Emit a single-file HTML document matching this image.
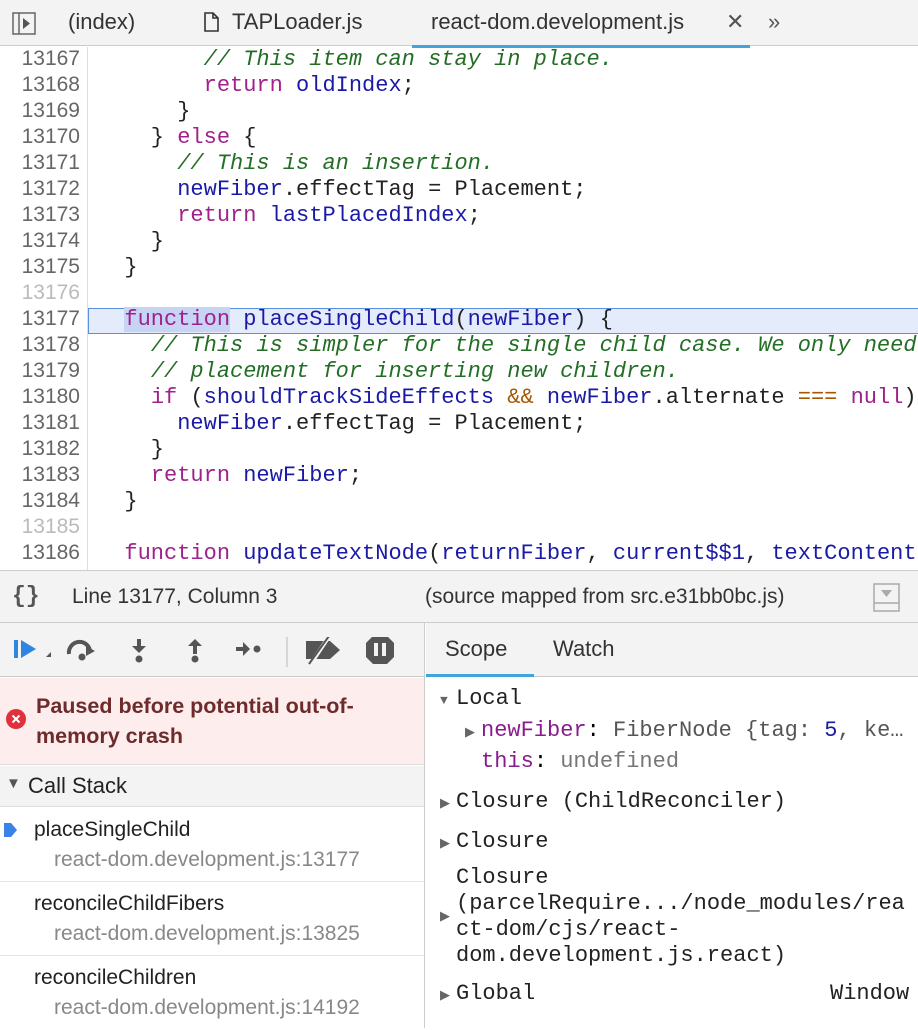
<!DOCTYPE html>
<html><head><meta charset="utf-8"><style>
*{margin:0;padding:0;box-sizing:border-box}
body{width:918px;height:1028px;overflow:hidden;background:#fff;font-family:"Liberation Sans",sans-serif;position:relative}
.abs{position:absolute}
.tabs{left:0;top:0;width:918px;height:46px;background:#f3f3f3;border-bottom:1px solid #ccc}
.tab{position:absolute;top:9px;font-size:22px;color:#333}
.code{left:0;top:47px;width:918px;height:523px;overflow:hidden}
.gut{position:absolute;left:0;top:0;width:88px;height:523px;border-right:1px solid #ddd}
.ln{position:absolute;left:0;width:80px;text-align:right;font-size:21px;color:#666;font-family:"Liberation Sans",sans-serif}
.cl{position:absolute;left:98px;font-family:"Liberation Mono",monospace;font-size:22px;white-space:pre;color:#222}
.c{color:#236e25;font-style:italic}.k{color:#a0218c}.v{color:#1a1aa6}.d{color:#222}.o{color:#a65700}
.mono{font-family:"Liberation Mono",monospace;font-size:22px;white-space:pre}
.tr{display:inline-block;width:16px;font-size:13px;color:#666}
</style></head><body>
<div class="abs tabs">
 <svg class="abs" style="left:12px;top:12px" width="26" height="24"><rect x="1" y="1" width="22" height="21" fill="none" stroke="#666" stroke-width="1.5"/><line x1="7" y1="1" x2="7" y2="22" stroke="#666" stroke-width="1.5"/><path d="M11 6 L18 11.5 L11 17Z" fill="#555"/></svg>
 <div class="tab" style="left:68px">(index)</div>
 <svg class="abs" style="left:203px;top:12px" width="16" height="20"><path d="M2 1H10L15 6V19H2Z M10 1V6H15" fill="none" stroke="#333" stroke-width="1.6"/></svg>
 <div class="tab" style="left:232px">TAPLoader.js</div>
 <div class="tab" style="left:431px">react-dom.development.js</div>
 <div class="tab" style="left:726px;color:#555">✕</div>
 <div class="tab" style="left:768px;color:#555">»</div>
</div>
<div class="abs" style="left:412px;top:45px;width:338px;height:3px;background:#40a5db"></div>
<div class="abs code">
 <div class="abs" style="left:88px;top:261px;width:830px;height:26px;background:#e4ecfc;border:1px solid #5b8fe0;border-right:none"></div>
 <div class="gut"></div>
 <div class="ln" style="top:0">13167</div><div class="cl" style="top:0">        <span class="c">// This item can stay in place.</span></div>
 <div class="ln" style="top:26px">13168</div><div class="cl" style="top:26px">        <span class="k">return</span> <span class="v">oldIndex</span>;</div>
 <div class="ln" style="top:52px">13169</div><div class="cl" style="top:52px">      }</div>
 <div class="ln" style="top:78px">13170</div><div class="cl" style="top:78px">    } <span class="k">else</span> {</div>
 <div class="ln" style="top:104px">13171</div><div class="cl" style="top:104px">      <span class="c">// This is an insertion.</span></div>
 <div class="ln" style="top:130px">13172</div><div class="cl" style="top:130px">      <span class="v">newFiber</span>.effectTag = Placement;</div>
 <div class="ln" style="top:156px">13173</div><div class="cl" style="top:156px">      <span class="k">return</span> <span class="v">lastPlacedIndex</span>;</div>
 <div class="ln" style="top:182px">13174</div><div class="cl" style="top:182px">    }</div>
 <div class="ln" style="top:208px">13175</div><div class="cl" style="top:208px">  }</div>
 <div class="ln" style="top:234px;color:#bbb">13176</div>
 <div class="ln" style="top:260px">13177</div><div class="cl" style="top:260px">  <span class="k" style="background:#c8d4f4">function</span> <span class="v">placeSingleChild</span>(<span class="v">newFiber</span>) {</div>
 <div class="ln" style="top:286px">13178</div><div class="cl" style="top:286px">    <span class="c">// This is simpler for the single child case. We only need</span></div>
 <div class="ln" style="top:312px">13179</div><div class="cl" style="top:312px">    <span class="c">// placement for inserting new children.</span></div>
 <div class="ln" style="top:338px">13180</div><div class="cl" style="top:338px">    <span class="k">if</span> (<span class="v">shouldTrackSideEffects</span> <span class="o">&amp;&amp;</span> <span class="v">newFiber</span>.alternate <span class="o">===</span> <span class="k">null</span>)</div>
 <div class="ln" style="top:364px">13181</div><div class="cl" style="top:364px">      <span class="v">newFiber</span>.effectTag = Placement;</div>
 <div class="ln" style="top:390px">13182</div><div class="cl" style="top:390px">    }</div>
 <div class="ln" style="top:416px">13183</div><div class="cl" style="top:416px">    <span class="k">return</span> <span class="v">newFiber</span>;</div>
 <div class="ln" style="top:442px">13184</div><div class="cl" style="top:442px">  }</div>
 <div class="ln" style="top:468px;color:#bbb">13185</div>
 <div class="ln" style="top:494px">13186</div><div class="cl" style="top:494px">  <span class="k">function</span> <span class="v">updateTextNode</span>(<span class="v">returnFiber</span>, <span class="v">current$$1</span>, <span class="v">textContent</span></div>
</div>
<div class="abs" style="left:0;top:570px;width:918px;height:53px;background:#f3f3f3;border-top:1px solid #ccc;border-bottom:1px solid #ccc">
 <div class="abs" style="left:12px;top:12px;font-size:23px;color:#555;font-weight:bold;font-family:'Liberation Mono',monospace">{}</div>
 <div class="abs" style="left:72px;top:14px;font-size:21px;color:#333">Line 13177, Column 3</div>
 <div class="abs" style="left:425px;top:14px;font-size:21px;color:#333">(source mapped from src.e31bb0bc.js)</div>
 <svg class="abs" style="left:873px;top:12px" width="28" height="30"><rect x="1" y="1" width="25" height="27" fill="none" stroke="#aaa" stroke-width="1.5"/><line x1="1" y1="20" x2="26" y2="20" stroke="#aaa" stroke-width="1.5"/><path d="M8 7H19L13.5 14Z" fill="#aaa"/></svg>
</div>
<div class="abs" style="left:0;top:623px;width:425px;height:405px;border-right:1px solid #ccc">
 <div class="abs" style="left:0;top:0;width:424px;height:54px;background:#f3f3f3;border-bottom:1px solid #ccc">
  <svg class="abs" style="left:12px;top:14px" width="400" height="30">
   <rect x="2" y="3" width="4" height="18" fill="#2f86e0"/><path d="M9 3L24 12L9 21Z" fill="#2f86e0"/><path d="M34 20L39 20L39 15Z" fill="#555"/>
   <path d="M57 17 A10 10 0 0 1 78 14" fill="none" stroke="#555" stroke-width="4"/><path d="M74 9L83 14L74 19Z" fill="#555"/><circle cx="70" cy="20" r="3.5" fill="#555"/>
   <rect x="125" y="2" width="4" height="8" fill="#555"/><path d="M120 9H134L127 16Z" fill="#555"/><circle cx="127" cy="22" r="3.5" fill="#555"/>
   <path d="M176 9H190L183 2Z" fill="#555"/><rect x="181" y="9" width="4" height="8" fill="#555"/><circle cx="183" cy="22" r="3.5" fill="#555"/>
   <rect x="224" y="10" width="8" height="4" fill="#555"/><path d="M231 5L238 12L231 19Z" fill="#555"/><circle cx="245" cy="12" r="3.5" fill="#555"/>
   <line x1="275" y1="0" x2="275" y2="30" stroke="#ccc" stroke-width="1.5"/>
   <path d="M294 4H318L328 13L318 22H294Z" fill="#555"/><line x1="298" y1="28" x2="318" y2="-2" stroke="#f3f3f3" stroke-width="4"/><line x1="297" y1="27" x2="317" y2="-1" stroke="#555" stroke-width="2"/>
   <path d="M361 -1H375L382 6V20L375 27H361L354 20V6Z" fill="#555"/><rect x="362" y="6" width="4" height="13" fill="#f3f3f3"/><rect x="370" y="6" width="4" height="13" fill="#f3f3f3"/>
  </svg>
 </div>
 <div class="abs" style="left:0;top:55px;width:424px;height:87px;background:#fdeeed;border-bottom:1px solid #ddd">
  <svg class="abs" style="left:6px;top:31px" width="22" height="22"><circle cx="10" cy="10" r="10" fill="#e0313f"/><path d="M6.5 6.5L13.5 13.5M13.5 6.5L6.5 13.5" stroke="#fff" stroke-width="2"/></svg>
  <div class="abs" style="left:36px;top:13px;font-size:21.5px;font-weight:bold;color:#6e2b2b;line-height:30px">Paused before potential out-of-<br>memory crash</div>
 </div>
 <div class="abs" style="left:0;top:143px;width:424px;height:41px;background:#f3f3f3;border-bottom:1px solid #ddd">
  <div class="abs" style="left:6px;top:9px;font-size:15px;color:#555">▼</div>
  <div class="abs" style="left:28px;top:7px;font-size:22px;color:#222">Call Stack</div>
 </div>
 <div class="abs" style="left:0;top:185px;width:424px;height:74px;border-bottom:1px solid #e4e4e4">
  <svg class="abs" style="left:3px;top:14px" width="16" height="16"><path d="M1 1H8L14 8L8 15H1Z" fill="#3b82e8"/></svg>
  <div class="abs" style="left:34px;top:10px;font-size:21px;color:#222">placeSingleChild</div>
  <div class="abs" style="left:54px;top:40px;font-size:21px;color:#888">react-dom.development.js:13177</div>
 </div>
 <div class="abs" style="left:0;top:259px;width:424px;height:74px;border-bottom:1px solid #e4e4e4">
  <div class="abs" style="left:34px;top:10px;font-size:21px;color:#222">reconcileChildFibers</div>
  <div class="abs" style="left:54px;top:40px;font-size:21px;color:#888">react-dom.development.js:13825</div>
 </div>
 <div class="abs" style="left:0;top:333px;width:424px;height:74px">
  <div class="abs" style="left:34px;top:10px;font-size:21px;color:#222">reconcileChildren</div>
  <div class="abs" style="left:54px;top:40px;font-size:21px;color:#888">react-dom.development.js:14192</div>
 </div>
</div>
<div class="abs" style="left:426px;top:623px;width:492px;height:54px;background:#f3f3f3;border-bottom:1px solid #ccc">
 <div class="abs" style="left:19px;top:13px;font-size:22px;color:#333">Scope</div>
 <div class="abs" style="left:127px;top:13px;font-size:22px;color:#333">Watch</div>
 <div class="abs" style="left:0;top:51px;width:108px;height:3px;background:#40a5db"></div>
</div>
<div class="abs mono" style="left:440px;top:686px;line-height:26px">
<div style="position:absolute;left:0;top:0"><span class="tr">▼</span><span style="color:#222">Local</span></div>
<div style="position:absolute;left:25px;top:32px"><span class="tr">▶</span><span style="color:#8a1b8e">newFiber</span>: <span style="color:#555">FiberNode {tag: <span style="color:#1a1aa6">5</span>, ke…</span></div>
<div style="position:absolute;left:41px;top:63px"><span style="color:#8a1b8e">this</span>: <span style="color:#777">undefined</span></div>
<div style="position:absolute;left:0;top:103px"><span class="tr">▶</span><span style="color:#222">Closure (ChildReconciler)</span></div>
<div style="position:absolute;left:0;top:143px"><span class="tr">▶</span><span style="color:#222">Closure</span></div>
<div style="position:absolute;left:16px;top:179px;color:#222">Closure<br>(parcelRequire.../node_modules/rea<br>ct-dom/cjs/react-<br>dom.development.js.react)</div>
<div style="position:absolute;left:0;top:218px;font-size:13px;color:#666">▶</div>
<div style="position:absolute;left:0;top:295px"><span class="tr">▶</span><span style="color:#222">Global</span></div>
<div style="position:absolute;left:390px;top:295px;color:#222">Window</div>
</div>
</body></html>
